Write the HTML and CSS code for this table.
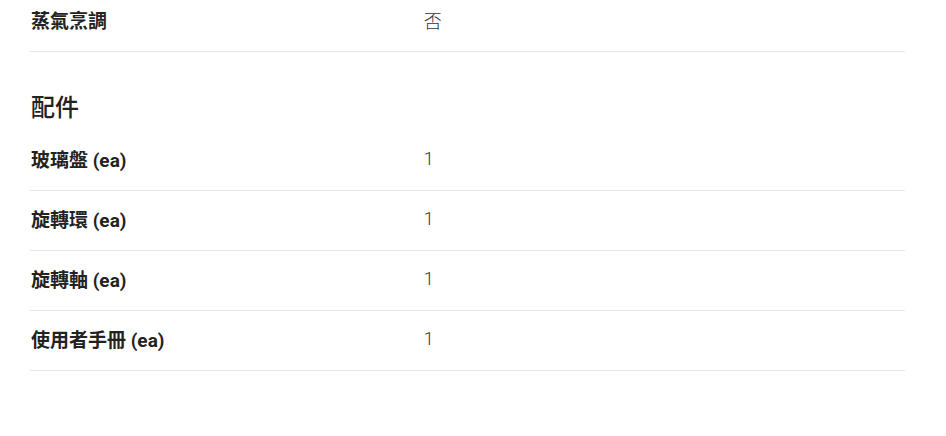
FILE: index.html
```html
<!DOCTYPE html>
<html lang="zh-Hant">
<head>
  <meta charset="UTF-8">
  <meta name="viewport" content="width=device-width, initial-scale=1.0">
  <title>規格</title>
  <link rel="stylesheet" href="styles.css">
</head>
<body>
  <main class="specs">
    <section class="spec-group spec-group--cut">
      <dl class="spec-list">
        <div class="spec-row">
          <dt>蒸氣烹調</dt>
          <dd>否</dd>
        </div>
      </dl>
    </section>

    <section class="spec-group">
      <h2 class="spec-title">配件</h2>
      <dl class="spec-list">
        <div class="spec-row">
          <dt>玻璃盤 (ea)</dt>
          <dd>1</dd>
        </div>
        <div class="spec-row">
          <dt>旋轉環 (ea)</dt>
          <dd>1</dd>
        </div>
        <div class="spec-row">
          <dt>旋轉軸 (ea)</dt>
          <dd>1</dd>
        </div>
        <div class="spec-row">
          <dt>使用者手冊 (ea)</dt>
          <dd>1</dd>
        </div>
      </dl>
    </section>
  </main>
</body>
</html>
```

FILE: styles.css
```css
/* Estilos generales */
body {
  margin: 0;
  padding: 0;
  background: #fff;
  color: #222;
  font-family: Roboto, "Noto Sans CJK TC", sans-serif;
}

.specs {
  padding: 0 41px 0 30px;
}

/* the page is scrolled: the first row is cut at the top */
.spec-group--cut {
  margin-top: -8px;
}

.spec-title {
  margin: 0;
  padding: 39px 0 0 1px;
  height: 40px;
  font-size: 24px;
  font-weight: 500;
  line-height: 34px;
  color: #222;
}

.spec-list {
  margin: 0;
}

.spec-row {
  display: flex;
  align-items: center;
  box-sizing: border-box;
  height: 60px;
  padding-bottom: 4px;
  border-bottom: 1px solid #e6e6e6;
}

.spec-row dt {
  width: 45%;
  padding-left: 1px;
  font-size: 19px;
  font-weight: 700;
  color: #222;
}

.spec-row dd {
  margin: 0 0 0 -1px;
  font-size: 18px;
  font-weight: 300;
  color: #333;
}
```
